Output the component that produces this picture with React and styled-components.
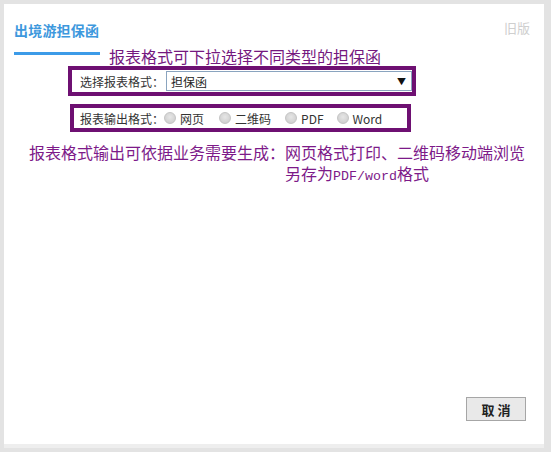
import styled, { createGlobalStyle } from 'styled-components'

const GlobalStyle = createGlobalStyle`
    html, body {
        margin: 0;
        padding: 0;
        background: #e3e3e3;
    }
    body {
        font-family: "Noto Sans CJK SC", "Liberation Sans", sans-serif;
    }
`

const Page = styled.div`
    box-sizing: border-box;
    width: 551px;
    height: 452px;
    padding: 4px 7px 8px 4px;
`

const Panel = styled.div`
    box-sizing: border-box;
    height: 440px;
    background: #fff;
    box-shadow: 0 4px 0 #eeeeee;
    display: flex;
    flex-direction: column;
    padding: 0 18px 23px 10px;
`

const Header = styled.div`
    display: flex;
    justify-content: space-between;
    align-items: center;
    height: 44px;
    padding-top: 4px;
    box-sizing: border-box;
`

const Title = styled.div`
    color: #3d98dd;
    font-size: 14px;
    font-weight: bold;
    letter-spacing: 0.2px;
    margin-top: 4px;
`

const OldVersion = styled.div`
    color: #cfcfcf;
    font-size: 13px;
    margin-right: -4px;
    margin-top: -2px;
`

const TabRow = styled.div`
    display: flex;
    align-items: flex-start;
    height: 18px;
`

const TabLine = styled.div`
    width: 86px;
    height: 3px;
    background: #3c9be8;
    margin-top: 4px;
`

const Note = styled.div`
    color: #75197f;
    font-size: 16px;
    line-height: 20px;
    white-space: nowrap;
    margin-left: ${(p) => p.$indent || 0}px;
    margin-top: ${(p) => p.$top || 0}px;
`

const Frame = styled.div`
    box-sizing: border-box;
    display: flex;
    align-items: center;
    border: 4px solid #6e1072;
    margin-left: ${(p) => p.$left}px;
    width: ${(p) => p.$width}px;
    height: ${(p) => p.$height}px;
    margin-top: ${(p) => p.$top}px;
    padding: 0 0 0 ${(p) => p.$pad}px;
    font-size: 12px;
    color: #333;
`

const Label = styled.span`
    white-space: nowrap;
`

const SelectBox = styled.div`
    flex: 1;
    box-sizing: border-box;
    height: 20px;
    margin-left: 2px;
    border: 1px solid #8aa4bf;
    display: flex;
    align-items: center;
    justify-content: space-between;
    padding: 0 5px 0 4px;
    font-size: 12px;
    color: #222;
`

const Arrow = styled.span`
    font-size: 9px;
    color: #111;
`

const RadioGroup = styled.div`
    display: flex;
    align-items: center;
`

const RadioItem = styled.label`
    display: flex;
    align-items: center;
    margin-right: ${(p) => p.$gap}px;
    font-size: 12px;
    color: #333;
`

const Radio = styled.span`
    width: 10px;
    height: 10px;
    border-radius: 50%;
    border: 1px solid #c4c4c4;
    background: radial-gradient(circle at 50% 40%, #e6e6e6, #c9c9c9);
    margin-right: 4px;
`

const Explain = styled.div`
    display: flex;
    margin-left: 15px;
    margin-top: 10px;
    color: #7d1a89;
    font-size: 16px;
    line-height: 21px;
    font-family: "Noto Sans CJK SC", sans-serif;
`

const Lead = styled.span`
    white-space: nowrap;
`

const Body = styled.div`
    width: 242px;
`

const Line = styled.div`
    display: flex;
    align-items: baseline;
    white-space: nowrap;
`

const Latin = styled.span`
    font-family: "Liberation Mono", monospace;
    font-size: 13.3px;
    line-height: 16px;
`

const Footer = styled.div`
    margin-top: auto;
    display: flex;
    justify-content: flex-end;
`

const CancelButton = styled.button`
    width: 60px;
    height: 24px;
    border: 1px solid #a6a6a6;
    background: #e9e9e9;
    font-family: "Noto Sans CJK SC", sans-serif;
    font-size: 13px;
    font-weight: bold;
    color: #222;
    padding: 0;
    letter-spacing: 3px;
    text-indent: 3px;
`

const outputs = [
    { text: '网页', gap: 15 },
    { text: '二维码', gap: 14 },
    { text: 'PDF', gap: 13 },
    { text: 'Word', gap: 0 },
]

const App = () => {
    return (
        <Page>
            <GlobalStyle />
            <Panel>
                <Header>
                    <Title>出境游担保函</Title>
                    <OldVersion>旧版</OldVersion>
                </Header>
                <TabRow>
                    <TabLine />
                    <Note $indent={9} $top={-2}>报表格式可下拉选择不同类型的担保函</Note>
                </TabRow>
                <Frame $left={54} $width={348} $height={30} $top={0} $pad={8}>
                    <Label>选择报表格式：</Label>
                    <SelectBox>
                        <span>担保函</span>
                        <Arrow>▼</Arrow>
                    </SelectBox>
                </Frame>
                <Frame $left={56} $width={341} $height={28} $top={8} $pad={6}>
                    <Label>报表输出格式：</Label>
                    <RadioGroup>
                        {outputs.map((o) => (
                            <RadioItem key={o.text} $gap={o.gap}>
                                <Radio />
                                {o.text}
                            </RadioItem>
                        ))}
                    </RadioGroup>
                </Frame>
                <Explain>
                    <Lead>报表格式输出可依据业务需要生成：</Lead>
                    <Body>
                        <Line>网页格式打印、二维码移动端浏览</Line>
                        <Line>
                            <span>另存为</span>
                            <Latin>PDF/word</Latin>
                            <span>格式</span>
                        </Line>
                    </Body>
                </Explain>
                <Footer>
                    <CancelButton>取消</CancelButton>
                </Footer>
            </Panel>
        </Page>
    )
}

export default App
